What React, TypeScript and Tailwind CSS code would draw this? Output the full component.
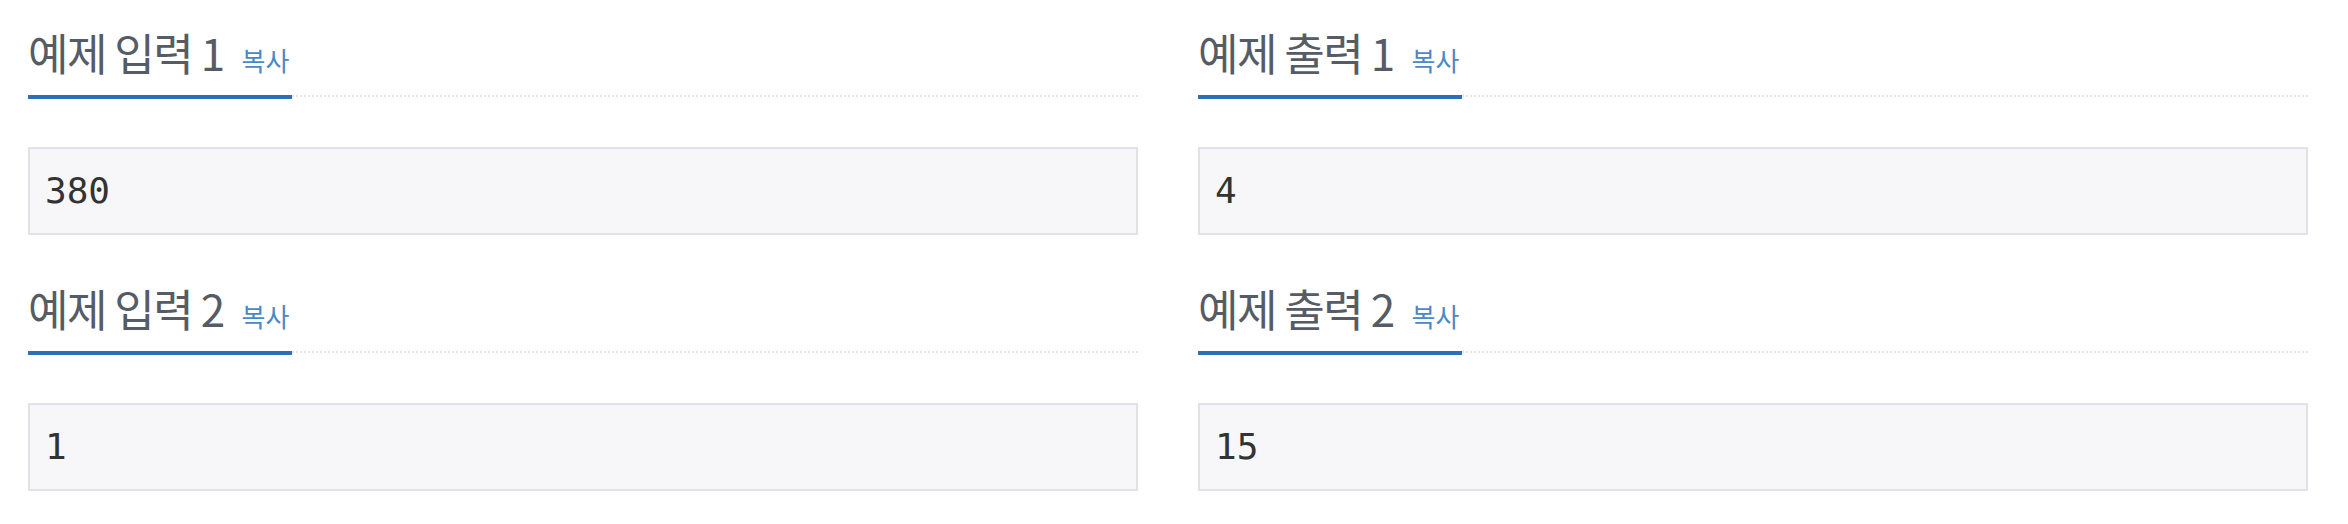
import React from "react";

const samples = [
  [
    { title: "예제 입력 1", data: "380" },
    { title: "예제 입력 2", data: "1" },
  ],
  [
    { title: "예제 출력 1", data: "4" },
    { title: "예제 출력 2", data: "15" },
  ],
];

function Sample({ title, data }: { title: string; data: string }) {
  return (
    <section className="pt-[30px] mb-[21px]">
      <div className="flex border-b-2 border-dotted border-[#e3e3e8]">
        <div className="w-[264px] -mb-[4px] border-b-4 border-[#2f70b5] pb-[21px] flex items-baseline whitespace-nowrap">
          <h2
            className="text-[44px] leading-[44px] text-[#555c66] tracking-[-1.5px]"
            style={{ fontFamily: '"Noto Sans CJK KR", "Noto Sans", sans-serif' }}
          >
            {title}
          </h2>
          <a
            className="ml-[18px] text-[26px] leading-[26px] text-[#4a88c8] cursor-pointer"
            style={{ fontFamily: '"Noto Sans CJK KR", "Noto Sans", sans-serif' }}
          >
            복사
          </a>
        </div>
      </div>
      <pre
        className="mt-[50px] h-[88px] flex items-center pl-[15px] border-2 border-[#e1e1e8] bg-[#f7f7f9] text-[36px] text-[#333]"
        style={{ fontFamily: '"DejaVu Sans Mono", "Liberation Mono", monospace' }}
      >
        {data}
      </pre>
    </section>
  );
}

export default function App() {
  return (
    <div className="w-[2348px] h-[524px] bg-white flex gap-[60px] pl-[28px] pr-[40px] overflow-hidden">
      {samples.map((col, i) => (
        <div key={i} className="flex-1 flex flex-col">
          {col.map((s) => (
            <Sample key={s.title} title={s.title} data={s.data} />
          ))}
        </div>
      ))}
    </div>
  );
}
